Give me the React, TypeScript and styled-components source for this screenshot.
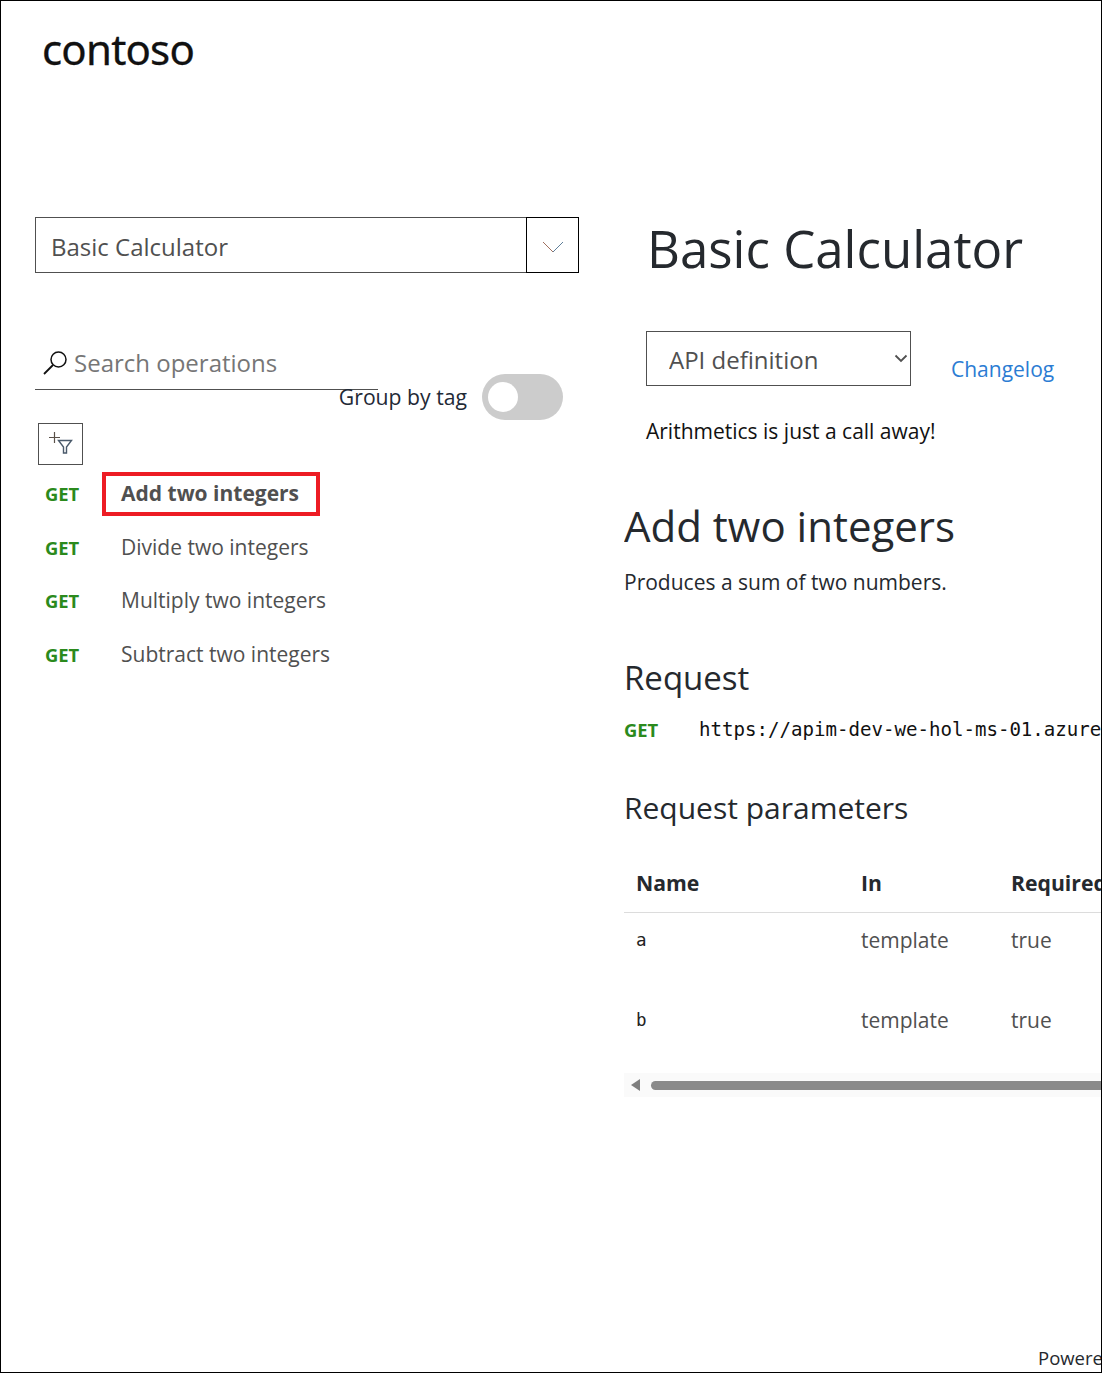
import React from "react";
import styled, { createGlobalStyle } from "styled-components";

const Global = createGlobalStyle`
  html, body { margin: 0; padding: 0; background: #fff; }
  body { font-family: "Open Sans", "Noto Sans", sans-serif; }
  * { box-sizing: border-box; }
`;

const Frame = styled.div`
  width: 1102px; height: 1373px; border: 1px solid #000; overflow: hidden; background: #fff;
  display: flex; flex-direction: column; position: relative;
`;
const Header = styled.header`
  height: 216px; padding: 21px 0 0 41px; flex: none;
`;
const Logo = styled.div`
  font-family: "Noto Sans", sans-serif; font-size: 42px; line-height: 54px; color: #111; letter-spacing: -0.8px; -webkit-text-stroke: 0.3px #111;
`;
const Main = styled.main`
  display: flex; flex: 1; min-height: 0;
`;
const Side = styled.aside`
  width: 623px; flex: none; padding-left: 34px;
`;
const ApiPicker = styled.div`
  width: 544px; height: 56px; border: 1px solid #505050; display: flex; align-items: stretch;
`;
const ApiName = styled.div`
  flex: 1; padding-left: 15px; font-size: 24px; line-height: 58px; color: #505050;
`;
const ApiToggle = styled.div`
  width: 53px; margin: -1px -1px -1px 0; border: 1px solid #000; display: flex; align-items: center; justify-content: center; padding-top: 4px;
`;
const SearchBox = styled.div`
  width: 343px; height: 59px; margin-top: 58px; border-bottom: 1px solid #505050;
  display: flex; align-items: flex-start; gap: 6px; padding: 19px 0 0 8px;
`;
const SearchText = styled.span`
  font-size: 24px; line-height: 32px; color: #767676; margin-top: -3px;
`;
const GroupRow = styled.div`
  width: 528px; height: 46px; margin-top: -16px; display: flex; justify-content: flex-end; align-items: center; gap: 15px;
`;
const GroupLabel = styled.span`
  font-size: 21.2px; color: #1f2a36; line-height: 46px;
`;
const Toggle = styled.div`
  width: 81px; height: 46px; border-radius: 23px; background: #cccccc; padding: 8px 6px; flex: none;
`;
const Knob = styled.div`
  width: 30px; height: 30px; border-radius: 50%; background: #fff;
`;
const FilterBtn = styled.div`
  width: 45px; height: 42px; margin: 3px 0 0 3px; border: 1px solid #505050; position: relative;
`;
const Ops = styled.ul`
  list-style: none; margin: 2px 0 0; padding: 0;
`;
const Op = styled.li`
  height: 53.7px; display: flex; align-items: center; position: relative; padding-left: 10px;
`;
const Verb = styled.span`
  width: 76px; flex: none; font-size: 18.4px; font-weight: 700; color: #2b8a1d; line-height: 24px;
`;
const OpName = styled.span<{ $active?: boolean }>`
  font-size: 21px; line-height: 30px; margin-top: -2px; color: #505050; font-weight: ${(p) => (p.$active ? 700 : 400)};
`;
const Highlight = styled.span`
  position: absolute; left: 67px; top: 5px; width: 218px; height: 44px; border: 4.5px solid #ed1c24;
`;
const Content = styled.section`
  flex: 1; min-width: 0; position: relative; overflow: hidden;
`;
const Intro = styled.div`
  padding-left: 22px;
`;
const Title = styled.h1`
  margin: -1px 0 0; font-weight: 400; font-size: 51px; line-height: 64px; color: #25292e; padding-left: 1px;
`;
const DefRow = styled.div`
  display: flex; align-items: flex-start; gap: 40px; margin-top: 51px;
`;
const DefWrap = styled.div`
  position: relative; width: 265px; height: 55px; flex: none;
`;
const DefSelect = styled.select`
  width: 100%; height: 100%; border: 1px solid #505050; background: #fff; border-radius: 0; appearance: none;
  font-family: inherit; font-size: 24px; color: #505050; padding: 2px 0 0 22px;
`;
const DefChevron = styled.svg`
  position: absolute; left: 248px; top: 23px; pointer-events: none;
`;
const Changelog = styled.a`
  font-size: 21px; line-height: 30px; color: #2b7cd3; margin-top: 23px; text-decoration: none;
`;
const Lead = styled.p`
  margin: 30px 0 0; font-size: 21px; line-height: 30px; color: #111;
`;
const H2 = styled.h2`
  margin: 51px 0 0; font-weight: 400; font-size: 42px; line-height: 58px; color: #25292e;
`;
const Desc = styled.p`
  margin: 12px 0 0; font-size: 21px; line-height: 30px; color: #25292e;
`;
const H3 = styled.h3`
  margin: 0; font-weight: 400; font-size: 33px; line-height: 44px; color: #25292e;
`;
const H4 = styled.h4`
  margin: 0; font-weight: 400; font-size: 30px; line-height: 42px; color: #25292e;
`;
const Body = styled.div`
  width: 478px;
`;
const RequestBlock = styled.div`
  margin-top: 59px;
`;
const UrlRow = styled.div`
  display: flex; align-items: center; margin-top: 14px; white-space: nowrap; height: 30px;
`;
const UrlVerb = styled.span`
  width: 75px; flex: none; font-size: 18.4px; font-weight: 700; color: #2b8a1d;
`;
const Url = styled.span`
  font-family: "DejaVu Sans Mono", monospace; font-size: 19.1px; color: #111;
`;
const ParamsBlock = styled.div`
  margin-top: 43px;
`;
const Table = styled.div`
  margin-top: 39px; width: 600px;
`;
const TableRow = styled.div<{ $head?: boolean }>`
  display: grid; grid-template-columns: 225px 150px 1fr; padding-left: 12px;
  height: ${(p) => (p.$head ? "45px" : "80px")};
  ${(p) => (p.$head ? "border-bottom: 1px solid #dcdcdc;" : "")}
  font-size: ${(p) => (p.$head ? "21.200px" : "21px")}; line-height: 30px;
  ${(p) => (p.$head ? "font-weight: 700; color: #25292e;" : "color: #505050; padding-top: 12px;")}
`;
const Mono = styled.span`
  font-family: "DejaVu Sans Mono", monospace; font-size: 17.500px; color: #222;
`;
const ScrollTrack = styled.div`
  width: 478px; height: 24px; background: #fafafa; display: flex; align-items: center; gap: 11px; padding-left: 7px;
`;
const Arrow = styled.div`
  width: 0; height: 0; border-top: 6px solid transparent; border-bottom: 6px solid transparent; border-right: 9px solid #7f7f7f;
`;
const Thumb = styled.div`
  flex: 1; height: 9px; border-radius: 5px 0 0 5px; background: #8a8a8a;
`;
const Footer = styled.div`
  position: absolute; left: 1037px; top: 1343px; font-size: 18.500px; line-height: 28px; color: #25292e; white-space: nowrap;
`;

export default function App() {
  return (
    <>
      <Global />
      <Frame>
        <Header>
          <Logo>contoso</Logo>
        </Header>
        <Main>
          <Side>
            <ApiPicker>
              <ApiName>Basic Calculator</ApiName>
              <ApiToggle>
                <svg width="22" height="12" viewBox="0 0 22 12" fill="none">
                  <path d="M1 1l10 10" stroke="#a0705f" strokeWidth="1" />
                  <path d="M11 11L21 1" stroke="#5f7f99" strokeWidth="1" />
                </svg>
              </ApiToggle>
            </ApiPicker>
            <SearchBox>
              <svg width="25" height="26" viewBox="0 0 25 26" fill="none" stroke="#111" strokeWidth="1.5">
                <circle cx="15.5" cy="9.5" r="7.5" />
                <path d="M10 15L1 24" strokeWidth="1.8" />
              </svg>
              <SearchText>Search operations</SearchText>
            </SearchBox>
            <GroupRow>
              <GroupLabel>Group by tag</GroupLabel>
              <Toggle>
                <Knob />
              </Toggle>
            </GroupRow>
            <FilterBtn>
              <svg width="43" height="40" viewBox="0 0 43 40" fill="none">
                <path d="M15.500 8v11M10 13.500h11" stroke="#5a5048" strokeWidth="1.200" />
                <path d="M19.500 16.500h13l-5 6.500v6h-3v-6z" stroke="#4a5a6b" strokeWidth="1.400" />
              </svg>
            </FilterBtn>
            <Ops>
              <Op>
                <Verb>GET</Verb>
                <OpName $active>Add two integers</OpName>
                <Highlight />
              </Op>
              <Op>
                <Verb>GET</Verb>
                <OpName>Divide two integers</OpName>
              </Op>
              <Op>
                <Verb>GET</Verb>
                <OpName>Multiply two integers</OpName>
              </Op>
              <Op>
                <Verb>GET</Verb>
                <OpName>Subtract two integers</OpName>
              </Op>
            </Ops>
          </Side>
          <Content>
            <Intro>
              <Title>Basic Calculator</Title>
              <DefRow>
                <DefWrap>
                  <DefSelect defaultValue="API definition">
                    <option>API definition</option>
                  </DefSelect>
                  <DefChevron width="14" height="9" viewBox="0 0 14 9" fill="none">
                    <path d="M1.500 1.500L7 7l5.500-5.500" stroke="#505050" strokeWidth="1.800" />
                  </DefChevron>
                </DefWrap>
                <Changelog href="#">Changelog</Changelog>
              </DefRow>
              <Lead>Arithmetics is just a call away!</Lead>
            </Intro>
            <Body>
              <H2>Add two integers</H2>
              <Desc>Produces a sum of two numbers.</Desc>
              <RequestBlock>
                <H3>Request</H3>
                <UrlRow>
                  <UrlVerb>GET</UrlVerb>
                  <Url>https://apim-dev-we-hol-ms-01.azure-api.net/calc/add</Url>
                </UrlRow>
              </RequestBlock>
              <ParamsBlock>
                <H4>Request parameters</H4>
                <Table>
                  <TableRow $head>
                    <span>Name</span>
                    <span>In</span>
                    <span>Required</span>
                  </TableRow>
                  <TableRow>
                    <Mono>a</Mono>
                    <span>template</span>
                    <span>true</span>
                  </TableRow>
                  <TableRow>
                    <Mono>b</Mono>
                    <span>template</span>
                    <span>true</span>
                  </TableRow>
                </Table>
                <ScrollTrack>
                  <Arrow />
                  <Thumb />
                </ScrollTrack>
              </ParamsBlock>
            </Body>
          </Content>
        </Main>
        <Footer>Powered by Azure API Management</Footer>
      </Frame>
    </>
  );
}
